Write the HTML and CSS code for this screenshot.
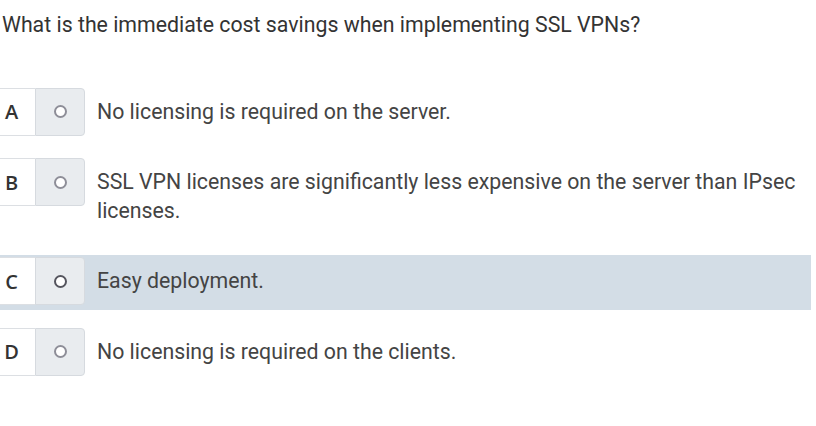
FILE: index.html
```html
<!DOCTYPE html>
<html>
<head>
<meta charset="utf-8">
<link rel="stylesheet" href="styles.css">
</head>
<body>
<div class="quiz">
  <div class="question">What is the immediate cost savings when implementing SSL VPNs?</div>
  <div class="options">
    <div class="option">
      <div class="letter">A</div>
      <div class="radio-box"><span class="radio"></span></div>
      <div class="text">No licensing is required on the server.</div>
    </div>
    <div class="option">
      <div class="letter">B</div>
      <div class="radio-box"><span class="radio"></span></div>
      <div class="text">SSL VPN licenses are significantly less expensive on the server than IPsec licenses.</div>
    </div>
    <div class="option selected">
      <div class="letter">C</div>
      <div class="radio-box"><span class="radio"></span></div>
      <div class="text">Easy deployment.</div>
    </div>
    <div class="option">
      <div class="letter">D</div>
      <div class="radio-box"><span class="radio"></span></div>
      <div class="text">No licensing is required on the clients.</div>
    </div>
  </div>
</div>
</body>
</html>
```
FILE: styles.css
```css
html, body {
  margin: 0;
  padding: 0;
  background: #fff;
  overflow: hidden;
}
body {
  font-family: Roboto, "Liberation Sans", sans-serif;
}
.quiz {
  margin-left: -13px;
  width: 824px;
}
.question {
  padding: 11px 0 0 15px;
  font-size: 21.3px;
  line-height: 28.5px;
  color: #333;
}
.options {
  margin-top: 46px;
}
.option {
  display: flex;
  align-items: flex-start;
  padding: 2px 0 4px;
  margin-bottom: 16px;
}
.option.selected {
  background: #d3dde6;
}
.letter {
  flex-shrink: 0;
  width: 47px;
  height: 46px;
  border: 1px solid #dcdfe3;
  border-right: none;
  border-radius: 4px 0 0 4px;
  background: #fff;
  display: flex;
  align-items: center;
  justify-content: center;
  font-family: "Open Sans", sans-serif;
  font-weight: 600;
  font-size: 20px;
  color: #333;
}
.radio-box {
  flex-shrink: 0;
  width: 48px;
  height: 46px;
  border: 1px solid #d6dadf;
  border-radius: 0 4px 4px 0;
  background: #e9ecef;
  display: flex;
  align-items: center;
  justify-content: center;
}
.radio {
  width: 9px;
  height: 9px;
  border: 2px solid #8e8e98;
  border-radius: 50%;
  background: #fff;
}
.selected .radio {
  border-color: #55555e;
}
.text {
  margin-left: 12px;
  padding: 10px 8px 10px 0;
  font-size: 21.3px;
  line-height: 28.5px;
  color: #444;
}
```
